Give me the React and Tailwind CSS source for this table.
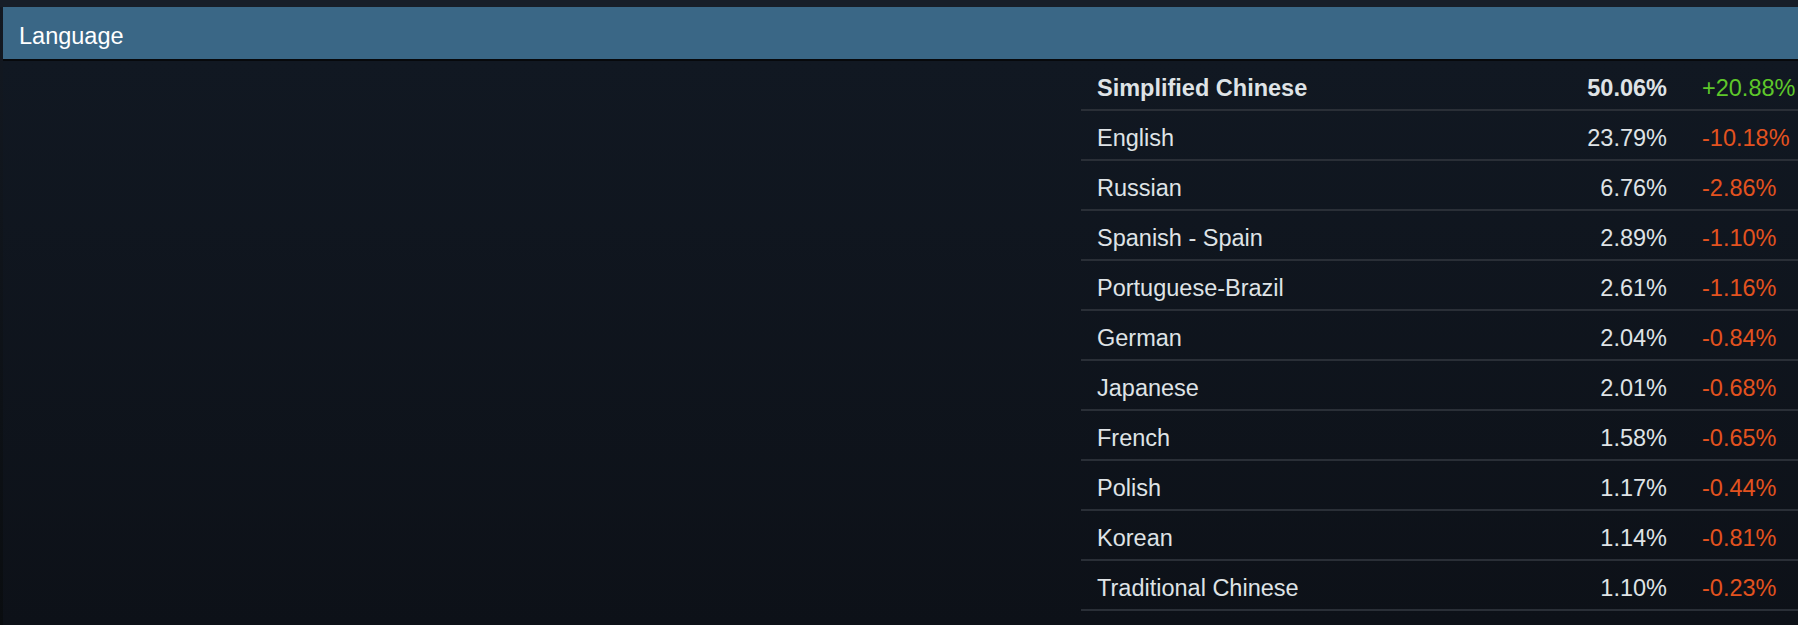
const rows = [
  { name: 'Simplified Chinese', share: '50.06%', change: '+20.88%', up: true, bold: true },
  { name: 'English', share: '23.79%', change: '-10.18%' },
  { name: 'Russian', share: '6.76%', change: '-2.86%' },
  { name: 'Spanish - Spain', share: '2.89%', change: '-1.10%' },
  { name: 'Portuguese-Brazil', share: '2.61%', change: '-1.16%' },
  { name: 'German', share: '2.04%', change: '-0.84%' },
  { name: 'Japanese', share: '2.01%', change: '-0.68%' },
  { name: 'French', share: '1.58%', change: '-0.65%' },
  { name: 'Polish', share: '1.17%', change: '-0.44%' },
  { name: 'Korean', share: '1.14%', change: '-0.81%' },
  { name: 'Traditional Chinese', share: '1.10%', change: '-0.23%' },
];

export default function App() {
  return (
    <div
      className="w-[1798px] h-[625px] overflow-hidden flex flex-col bg-[#171e28] text-[#dfe3e6]"
      style={{ fontFamily: '"Liberation Sans", Arial, sans-serif' }}
    >
      <div className="h-[7px] shrink-0" />
      <div className="flex flex-1 min-h-0">
        <div className="w-[3px] shrink-0 bg-gradient-to-b from-[#131922] to-[#0a0d10]" />
        <div className="flex-1 flex flex-col min-w-0">
          {/* Section header */}
          <div className="h-[54px] shrink-0 flex items-center pl-4 pt-[7px] bg-[#3a6786] border-b-2 border-[#07090c] text-white text-[23.5px]">
            Language
          </div>

          {/* Body */}
          <div className="flex-1 flex bg-gradient-to-b from-[#111822] to-[#0d1118]">
            <div className="flex-1" />
            <div className="w-[717px] shrink-0">
              {rows.map((r) => (
                <div
                  key={r.name}
                  className={`h-[50px] flex items-center pt-2 border-b-2 border-[#2a2f37] text-[23.5px] ${r.bold ? 'font-bold' : ''}`}
                >
                  <div className="flex-1 pl-4 whitespace-nowrap">{r.name}</div>
                  <div className="w-[150px] text-right">{r.share}</div>
                  <div
                    className={`w-[131px] pl-[35px] whitespace-nowrap font-normal ${r.up ? 'text-[#5ec72a]' : 'text-[#e3521f]'}`}
                  >
                    {r.change}
                  </div>
                </div>
              ))}
            </div>
          </div>
        </div>
      </div>
    </div>
  );
}
